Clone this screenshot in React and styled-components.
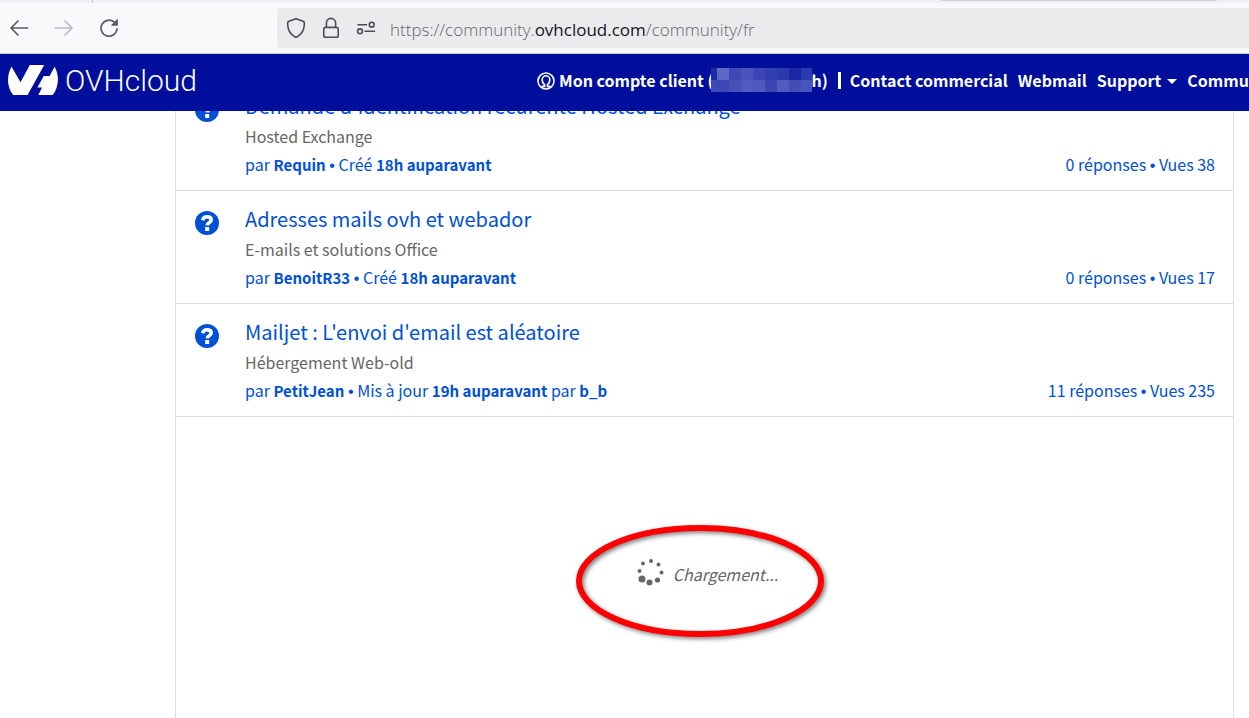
import styled, { createGlobalStyle } from "styled-components";

const GlobalStyle = createGlobalStyle`
  * {
    box-sizing: border-box;
  }
  body {
    margin: 0;
    background-color: #ffffff;
    font-family: "Noto Sans CJK SC", "Noto Sans", sans-serif;
    font-size: 16px;
  }
  button {
    border: none;
    padding: 0;
    background: none;
    font: inherit;
    color: inherit;
    cursor: pointer;
  }
  a {
    color: inherit;
    text-decoration: none;
  }
`;

const Window = styled.div`
  display: flex;
  flex-direction: column;
  height: 100vh;
  overflow: hidden;
`;

/* browser chrome */
const TabStrip = styled.div`
  display: flex;
  justify-content: space-between;
  flex: none;
  height: 3px;
  padding: 0 32px 0 92px;
  background-color: #f0f0f4;
`;
const TabSeparator = styled.span`
  width: 1px;
  background-color: #bfbfc6;
`;
const ActiveTab = styled.span`
  width: 276px;
  height: 1px;
  background-color: #d2d2d6;
`;
const Toolbar = styled.div`
  display: flex;
  flex: none;
  align-items: center;
  height: 51px;
  padding-left: 8px;
  background-color: #f9f9fb;
  border-bottom: 1px solid #cccccf;
`;
const ToolButton = styled.button`
  display: flex;
  justify-content: center;
  width: 22px;
  margin-right: 23px;
  color: ${(props) => (props.disabled ? "#bcbcc3" : "#5b5b66")};
`;
const AddressBar = styled.div`
  display: flex;
  flex: 1;
  align-items: center;
  height: 40px;
  margin-left: 134px;
  padding-left: 8px;
  border-radius: 4px 0 0 4px;
  background-color: #ebebed;
  color: #4c4c56;
`;
const AddressButton = styled.button`
  display: flex;
  justify-content: center;
  width: 22px;
  margin-right: 13px;
`;
const Address = styled.div`
  padding-top: 2px;
  font-family: "Open Sans", "Noto Sans", sans-serif;
  font-size: 17px;
  font-weight: 300;
  white-space: nowrap;
  color: #65656b;
`;
const Domain = styled.span`
  font-weight: 400;
  color: #15141a;
`;

/* site header */
const Header = styled.header`
  position: relative;
  z-index: 1;
  display: flex;
  flex: none;
  align-items: center;
  height: 57px;
  background-color: #000e9c;
  color: #ffffff;
`;
const Brand = styled.a`
  display: flex;
  flex: 0 0 43%;
  align-items: center;
  gap: 7px;
  padding: 0 0 6px 8px;
`;
const BrandName = styled.span`
  padding-top: 3px;
  font-family: Roboto, sans-serif;
  font-size: 30px;
  font-weight: 300;
  line-height: 36px;
`;
const Nav = styled.nav`
  display: flex;
  align-items: center;
  gap: 10px;
  padding-bottom: 6px;
  font-weight: 700;
  line-height: 24px;
  white-space: nowrap;
`;
const NavLink = styled.a`
  display: flex;
  align-items: center;
`;
const AccountIcon = styled.svg`
  margin: 2px 4px 0 0;
`;
const NavDivider = styled.span`
  width: 3px;
  height: 17px;
  margin: 2px -1px 0 0;
  background-color: #ffffff;
`;
const Caret = styled.span`
  margin: 4px 0 0 6px;
  border: 5px solid transparent;
  border-top-color: #ffffff;
  border-bottom: none;
`;
const Mosaic = styled.span`
  display: grid;
  grid-template-columns: 6px repeat(7, 12px) 11px;
  grid-auto-rows: 12px;
  margin-left: -3px;
`;
const Pixel = styled.span`
  background-color: ${(props) => props.$color};
`;

/* topics */
const Main = styled.main`
  display: flex;
  flex: 1;
  flex-direction: column;
  margin: -33px 15px 0 175px;
  border: solid #dddddd;
  border-width: 0 1px;
`;
const TopicList = styled.ul`
  margin: 0;
  padding: 0;
  list-style: none;
`;
const Topic = styled.li`
  display: flex;
  align-items: flex-start;
  gap: 26px;
  padding: 13px 18px 13px 19px;
  border-bottom: 1px solid #dddddd;
  color: #0050d7;
`;
const TopicIcon = styled.svg`
  flex: none;
  margin-top: 7px;
`;
const TopicBody = styled.div`
  flex: 1;
`;
const TopicTitle = styled.a`
  display: block;
  font-size: 20px;
  line-height: 30px;
`;
const Category = styled.div`
  line-height: 30px;
  color: #666666;
`;
const Meta = styled.div`
  display: flex;
  justify-content: space-between;
  line-height: 26px;
`;
const Strong = styled.b`
  font-size: 15px;
  line-height: 1;
`;
// the CJK face draws this bullet a full em wide
const Bullet = styled.span`
  font-family: "Liberation Sans", sans-serif;
  line-height: 1;
`;

const Loader = styled.div`
  position: relative;
  display: flex;
  align-self: center;
  align-items: center;
  gap: 8px;
  margin: 140px 0 0 6px;
  font-style: italic;
  line-height: 30px;
  color: #666666;
`;
const LoaderText = styled.span`
  padding-top: 2px;
`;
const Annotation = styled.svg`
  position: absolute;
  top: -36px;
  left: -62px;
  overflow: visible;
  pointer-events: none;
  filter: drop-shadow(2px 2px 2px rgba(0, 0, 0, 0.5));
`;

const mosaicColors = [
  "#1f2ba6", "#5f68c5", "#3f49b6", "#4a54bb", "#3c46b5", "#333eb0", "#2d38ae", "#1b27a6", "#2b3bae",
  "#3f4ab6", "#3c47b5", "#4550b9", "#515bbf", "#4f59bd", "#3b45b3", "#505bbf", "#434db6", "#4555bb",
];

const topics = [
  {
    title: "Demande d'identification récurente Hosted Exchange",
    category: "Hosted Exchange",
    author: "Requin",
    action: "Créé",
    time: "18h auparavant",
    replies: 0,
    views: 38,
  },
  {
    title: "Adresses mails ovh et webador",
    category: "E-mails et solutions Office",
    author: "BenoitR33",
    action: "Créé",
    time: "18h auparavant",
    replies: 0,
    views: 17,
  },
  {
    title: "Mailjet : L'envoi d'email est aléatoire",
    category: "Hébergement Web-old",
    author: "PetitJean",
    action: "Mis à jour",
    time: "19h auparavant",
    updatedBy: "b_b",
    replies: 11,
    views: 235,
  },
];

// x, y, radius, clockwise from the top
const spinnerDots = [
  [14, 2, 2],
  [21.5, 5.5, 2],
  [24.5, 13.5, 2],
  [20.5, 21, 2.6],
  [12.5, 23.5, 3],
  [5, 20, 3.5],
  [2.5, 12, 2],
  [6, 4.5, 2],
];

const BrowserBar = () => {
  return (
    <>
      <TabStrip>
        <TabSeparator />
        <ActiveTab />
      </TabStrip>
      <Toolbar>
        <ToolButton aria-label="Page précédente">
          <svg width="20" height="18" viewBox="0 0 20 18" fill="none" stroke="currentColor" strokeWidth="1.7">
            <path d="M18.5 9H2M9 2L2 9L9 16" strokeLinecap="round" strokeLinejoin="round" />
          </svg>
        </ToolButton>
        <ToolButton aria-label="Page suivante" disabled>
          <svg width="20" height="18" viewBox="0 0 20 18" fill="none" stroke="currentColor" strokeWidth="1.7">
            <path d="M1.5 9H18M11 2L18 9L11 16" strokeLinecap="round" strokeLinejoin="round" />
          </svg>
        </ToolButton>
        <ToolButton aria-label="Actualiser">
          <svg width="20" height="20" viewBox="0 0 20 20" fill="none" stroke="currentColor" strokeWidth="1.7">
            <path d="M15.3 4.2A8 8 0 1 0 18 10.8" strokeLinecap="round" />
            <path d="M18.3 1.5V7.2H12.6Z" fill="currentColor" strokeWidth="1" strokeLinejoin="round" />
          </svg>
        </ToolButton>
        <AddressBar>
          <AddressButton aria-label="Protection contre le pistage">
            <svg width="20" height="22" viewBox="0 0 20 22" fill="none" stroke="currentColor" strokeWidth="1.6">
              <path
                d="M10 1.8L17 4.2Q18.4 4.7 18.4 6.2C18.4 12.5 15.2 17.6 10.8 20Q10 20.4 9.2 20C4.8 17.6 1.6 12.5 1.6 6.2Q1.6 4.7 3 4.2Z"
                strokeLinejoin="round"
              />
            </svg>
          </AddressButton>
          <AddressButton aria-label="Connexion sécurisée">
            <svg width="18" height="22" viewBox="0 0 18 22" fill="none" stroke="currentColor" strokeWidth="1.6">
              <rect x="1.8" y="10.4" width="14.4" height="9.8" rx="1.8" />
              <path d="M4.4 10.4V6A4.6 4.6 0 0 1 13.6 6V10.4" />
            </svg>
          </AddressButton>
          <AddressButton aria-label="Autorisations">
            <svg width="20" height="14" viewBox="0 0 20 14" fill="none" stroke="currentColor" strokeWidth="1.6">
              <circle cx="15.7" cy="3.7" r="2.4" />
              <path d="M2 3.7H10.5M9 10.3H18.5" strokeLinecap="round" />
              <circle cx="4" cy="10.3" r="2.4" />
            </svg>
          </AddressButton>
          <Address role="textbox" aria-label="Adresse" tabIndex={0}>
            https://community.<Domain>ovhcloud.com</Domain>/community/fr
          </Address>
        </AddressBar>
      </Toolbar>
    </>
  );
};

const SiteHeader = () => {
  return (
    <Header>
      <Brand href="#">
        <svg width="50" height="30" viewBox="0 0 50 30" fill="#ffffff" aria-hidden="true">
          <path d="M3.6 1.8L12.5 17.2L21.8 0H36.2L19.6 30H5.2C-1.2 22-1.6 10.5 3.6 1.8Z" />
          <path d="M46.6 1.8C51.6 10.5 51 22 44.8 30H30.4L34 22.6H29.4L35.8 11H41.6Z" />
        </svg>
        <BrandName>OVHcloud</BrandName>
      </Brand>
      <Nav>
        <NavLink href="#">
          <AccountIcon width="18" height="18" viewBox="0 0 18 18" fill="none" stroke="#ffffff" strokeWidth="1.6">
            <circle cx="9" cy="9" r="8" />
            <path d="M4.6 14.4H7.6V12.6C5.6 11.4 5.2 9.4 5.2 7.8A3.8 4 0 0 1 12.8 7.8C12.8 9.4 12.4 11.4 10.4 12.6V14.4H13.4" />
          </AccountIcon>
          Mon compte client (
          <Mosaic>
            {mosaicColors.map((color, index) => {
              return <Pixel key={index} $color={color} />;
            })}
          </Mosaic>
          h)
        </NavLink>
        <NavDivider />
        <NavLink href="#">Contact commercial</NavLink>
        <NavLink href="#">Webmail</NavLink>
        <NavLink href="#">
          Support
          <Caret />
        </NavLink>
        <NavLink href="#">Communauté</NavLink>
      </Nav>
    </Header>
  );
};

const TopicRow = ({ topic }) => {
  return (
    <Topic>
      <TopicIcon width="24" height="24" viewBox="0 0 24 24" aria-hidden="true">
        <circle cx="12" cy="12" r="12" fill="#0050d7" />
        <path
          d="M7.6 9.2C8.2 6.8 9.8 5.8 12 5.8C14.6 5.8 16.2 7.1 16.2 9.1C16.2 11.7 12.4 11.4 12.2 14.4"
          fill="none"
          stroke="#ffffff"
          strokeWidth="3.6"
        />
        <rect x="10.2" y="16" width="4" height="4" fill="#ffffff" />
      </TopicIcon>
      <TopicBody>
        <TopicTitle href="#">{topic.title}</TopicTitle>
        <Category>{topic.category}</Category>
        <Meta>
          <span>
            par <Strong>{topic.author}</Strong> <Bullet>•</Bullet> {topic.action} <Strong>{topic.time}</Strong>
            {topic.updatedBy && (
              <>
                {" "}
                par <Strong>{topic.updatedBy}</Strong>
              </>
            )}
          </span>
          <span>
            {topic.replies} réponses <Bullet>•</Bullet> Vues {topic.views}
          </span>
        </Meta>
      </TopicBody>
    </Topic>
  );
};

const App = () => {
  return (
    <Window>
      <GlobalStyle />
      <BrowserBar />
      <SiteHeader />
      <Main>
        <TopicList>
          {topics.map((topic) => {
            return <TopicRow key={topic.title} topic={topic} />;
          })}
        </TopicList>
        <Loader role="status">
          <svg width="28" height="28" viewBox="0 0 28 28" fill="#666666" aria-hidden="true">
            {spinnerDots.map(([x, y, r]) => {
              return <circle key={`${x}-${y}`} cx={x} cy={y} r={r} />;
            })}
          </svg>
          <LoaderText>Chargement...</LoaderText>
          <Annotation width="250" height="120" viewBox="0 0 250 120" aria-hidden="true">
            <ellipse cx="125" cy="60" rx="121" ry="53" fill="none" stroke="#ff0000" strokeWidth="6" />
          </Annotation>
        </Loader>
      </Main>
    </Window>
  );
};

export default App;
